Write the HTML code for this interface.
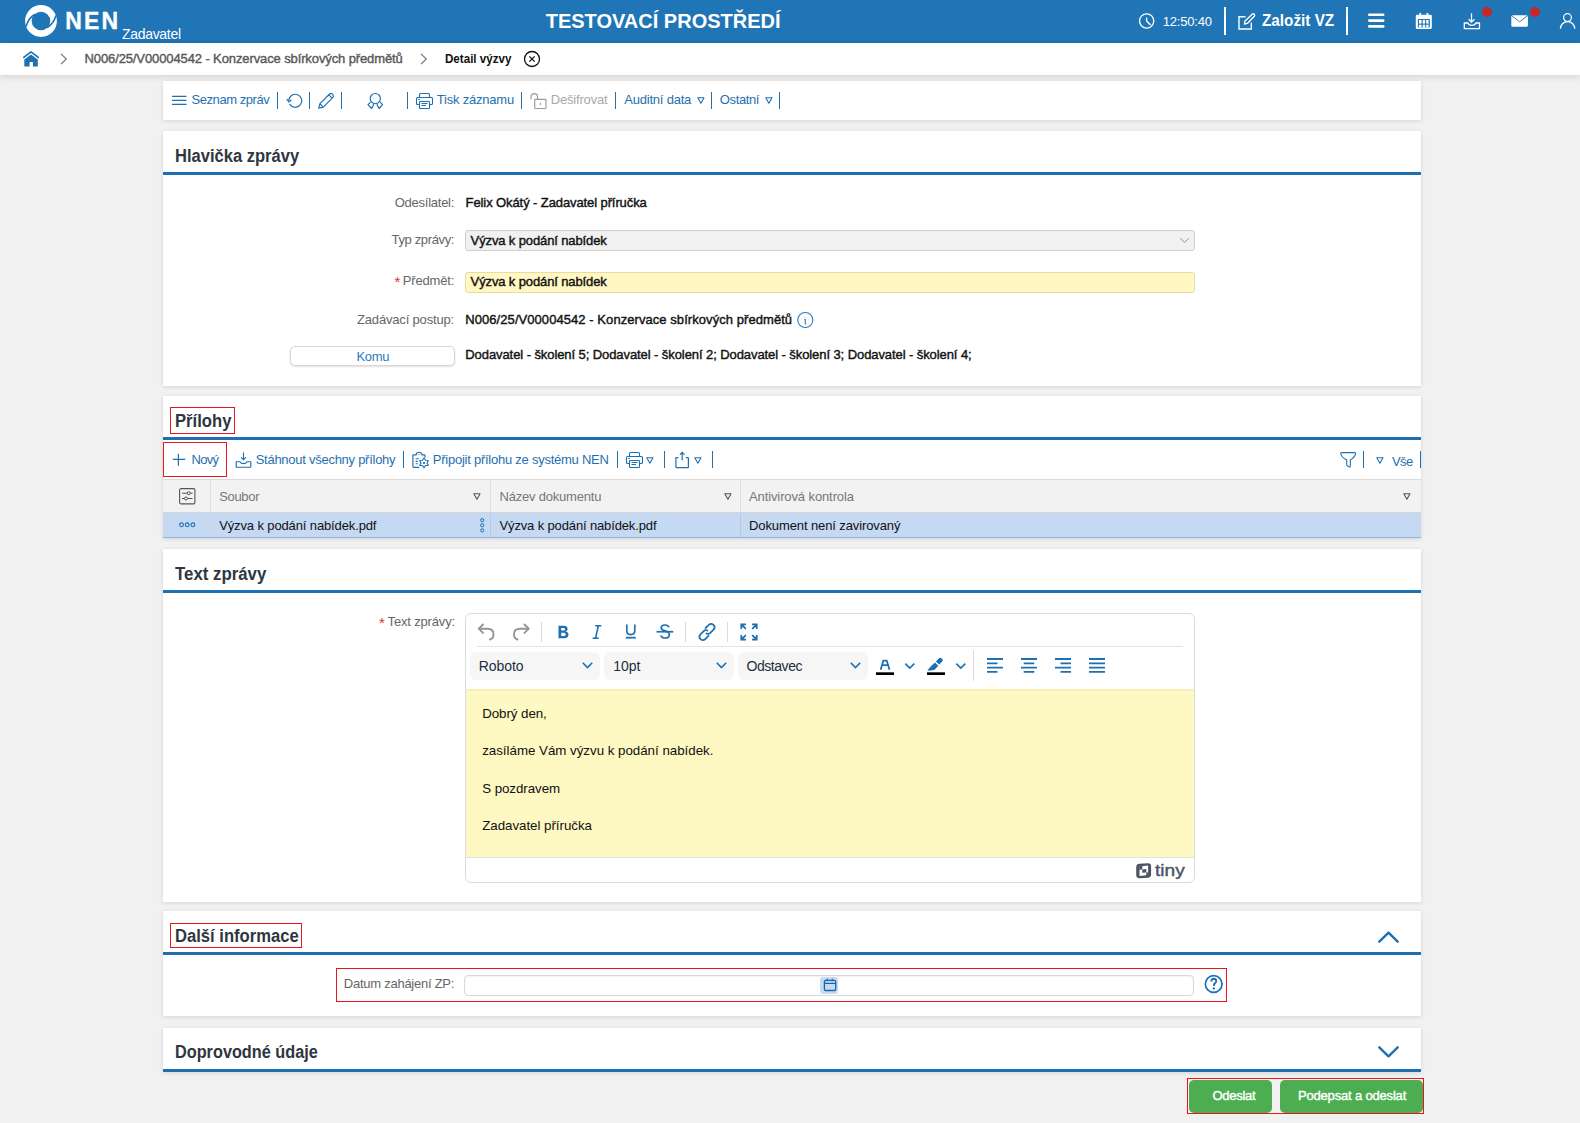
<!DOCTYPE html>
<html lang="cs"><head><meta charset="utf-8"><title>Detail výzvy</title>
<style>
*{box-sizing:border-box;margin:0;padding:0}
html,body{width:1580px;height:1123px;overflow:hidden}
body{background:#f1f1f1;font-family:"Liberation Sans",sans-serif;position:relative}
.t{position:absolute;white-space:nowrap;line-height:1;font-family:"Liberation Sans",sans-serif}
.a{position:absolute}
.hdr{position:absolute;left:0;top:0;width:1580px;height:43px;background:#1f75b6}
.bc{position:absolute;left:0;top:43px;width:1580px;height:32px;background:#fff;box-shadow:0 2px 7px rgba(0,0,0,.12)}
.panel{position:absolute;left:163px;width:1258px;background:#fff;box-shadow:0 1px 4px rgba(0,0,0,.12)}
.hline{position:absolute;left:0;width:1258px;height:3px;background:#1f70b0}
.sep{position:absolute;width:1px;height:17px;background:#1f70b0}
.hsep{position:absolute;width:2px;height:28px;top:7px;background:#fff}
svg{position:absolute;overflow:visible}
.red{position:absolute;border:1px solid #e8141e}

</style></head><body>
<div class="hdr"></div>
<!-- NEN logo -->
<svg style="left:25px;top:5px" width="32" height="32" viewBox="0 0 32 32">
 <circle cx="16" cy="16" r="12.6" fill="none" stroke="#fff" stroke-width="6.6"/>
 <path d="M10 9.2 Q3.5 13 1 21.5" fill="none" stroke="#1f75b6" stroke-width="1.6"/>
 <path d="M22 22.8 Q28.5 19 31 10.5" fill="none" stroke="#1f75b6" stroke-width="1.6"/>
</svg>
<!-- clock -->
<svg style="left:1138px;top:13px" width="17" height="17" viewBox="0 0 17 17">
 <circle cx="8.65" cy="7.95" r="7.15" fill="none" stroke="#fff" stroke-width="1.3"/>
 <path d="M8.6 5.3 V8.1 L12.1 11.4" fill="none" stroke="#fff" stroke-width="1.4" stroke-linecap="round" stroke-linejoin="round"/>
</svg>
<div class="hsep" style="left:1224px"></div>
<!-- edit icon -->
<svg style="left:1238px;top:13px" width="18" height="17" viewBox="0 0 18 17">
 <path d="M7.5 3.7 H1 V16 H13.3 V9.5" fill="none" stroke="#fff" stroke-width="1.4"/>
 <path d="M6.5 11 L7 8 L14.2 1.3 Q15.3 0.4 16.3 1.3 Q17.2 2.3 16.3 3.3 L9.3 10.4 Z" fill="none" stroke="#fff" stroke-width="1.4" stroke-linejoin="round"/>
</svg>
<div class="hsep" style="left:1346px"></div>
<!-- hamburger -->
<svg style="left:1368px;top:13px" width="17" height="15" viewBox="0 0 17 15">
 <rect x="0" y="0.5" width="16.5" height="2.6" rx="1.3" fill="#fff"/>
 <rect x="0" y="6.3" width="16.5" height="2.6" rx="1.3" fill="#fff"/>
 <rect x="0" y="12.1" width="16.5" height="2.6" rx="1.3" fill="#fff"/>
</svg>
<!-- calendar -->
<svg style="left:1415px;top:12px" width="18" height="18" viewBox="0 0 18 18">
 <rect x="0.8" y="2.8" width="16" height="14.1" rx="1.2" fill="#fff"/>
 <rect x="4.4" y="0.9" width="1.7" height="3" fill="#fff"/><rect x="11.6" y="0.9" width="1.7" height="3" fill="#fff"/>
 <rect x="2.9" y="7" width="12" height="8.3" fill="#1f75b6"/>
 <g fill="#fff"><rect x="4" y="8" width="2.5" height="3.6"/><rect x="7.7" y="8" width="2.4" height="3.6"/><rect x="11.2" y="8" width="2.4" height="3.6"/>
 <rect x="4" y="12.7" width="2.5" height="2.5"/><rect x="7.7" y="12.7" width="2.4" height="2.5"/><rect x="11.2" y="12.7" width="2.4" height="2.5"/></g>
</svg>
<!-- download tray -->
<svg style="left:1463px;top:13px" width="18" height="17" viewBox="0 0 18 17">
 <path d="M8.5 0.3 V9" stroke="#fff" stroke-width="1.3"/>
 <path d="M5.6 6.2 L8.5 9.1 L11.4 6.2" fill="none" stroke="#fff" stroke-width="1.3"/>
 <path d="M1.3 10 V15.6 H16.5 V10 H12.8 Q12 12.3 8.9 12.3 Q5.8 12.3 5 10 Z" fill="none" stroke="#fff" stroke-width="1.3" stroke-linejoin="round"/>
</svg>
<div class="a" style="left:1482px;top:7px;width:10px;height:10px;border-radius:5px;background:#c62828"></div>
<!-- mail -->
<svg style="left:1510px;top:14px" width="19" height="14" viewBox="0 0 19 14">
 <rect x="1.3" y="1.2" width="16.6" height="11.6" rx="1.6" fill="#fff"/>
 <path d="M1.7 1.7 L9.6 7.8 L17.5 1.7" fill="none" stroke="#1f75b6" stroke-width="0.9"/>
</svg>
<div class="a" style="left:1530px;top:7px;width:10px;height:10px;border-radius:5px;background:#c62828"></div>
<!-- user -->
<svg style="left:1559px;top:12px" width="18" height="18" viewBox="0 0 18 18">
 <circle cx="8.5" cy="5.6" r="3.9" fill="none" stroke="#fff" stroke-width="1.3"/>
 <path d="M1.4 16.8 A7.2 7.2 0 0 1 15.8 16.8" fill="none" stroke="#fff" stroke-width="1.3"/>
</svg>

<div class="panel" style="top:81px;height:39px"></div>
<div class="bc"></div>
<!-- home -->
<svg style="left:23px;top:50px" width="17" height="17" viewBox="0 0 17 17">
 <path d="M0.8 7.4 L8 1.9 L15.3 7.4" fill="none" stroke="#1f70b0" stroke-width="1.7" stroke-linecap="round" stroke-linejoin="round"/>
 <path d="M1.3 9.6 L8 4.6 L14.8 9.6 V16.6 H9.9 V12 H6.6 V16.6 H1.3 Z" fill="#1f70b0"/>
</svg>
<svg style="left:60px;top:53px" width="8" height="12" viewBox="0 0 8 12"><path d="M1 0.8 L6.3 6 L1 11.2" fill="none" stroke="#707070" stroke-width="1.1"/></svg>
<svg style="left:420px;top:53px" width="8" height="12" viewBox="0 0 8 12"><path d="M1 0.8 L6.3 6 L1 11.2" fill="none" stroke="#707070" stroke-width="1.1"/></svg>
<svg style="left:523px;top:50px" width="18" height="18" viewBox="0 0 18 18">
 <circle cx="9" cy="9" r="7.5" fill="none" stroke="#111" stroke-width="1.3"/>
 <path d="M6.4 6.4 L11.6 11.6 M11.6 6.4 L6.4 11.6" stroke="#111" stroke-width="1.3"/>
</svg>

<!-- toolbar panel -->
<svg style="left:172px;top:95px" width="15" height="11" viewBox="0 0 15 11"><path d="M0 1.3H14.5M0 5.3H14.5M0 9.4H14.5" stroke="#1f70b0" stroke-width="1.2"/></svg>
<div class="sep" style="left:277px;top:92px"></div>
<svg style="left:286px;top:93px" width="17" height="16" viewBox="0 0 17 16">
 <path d="M2.8 7.8 A6.5 6.5 0 1 1 3.67 11.05" fill="none" stroke="#1f70b0" stroke-width="1.2"/>
 <path d="M0.7 6.2 L2.9 8.9 L5.4 6.8" fill="none" stroke="#1f70b0" stroke-width="1.2"/>
</svg>
<div class="sep" style="left:309px;top:92px"></div>
<svg style="left:318px;top:93px" width="17" height="16" viewBox="0 0 17 16">
 <path d="M0.7 15.3 L1.9 10.7 L11.6 1 Q12.9 -0.1 14.2 1 L14.9 1.7 Q16 3 14.9 4.3 L5.3 14.1 Z M10.9 1.8 L14.1 5.1 M1.9 10.7 L5.3 14.1" fill="none" stroke="#1f70b0" stroke-width="1.15" stroke-linejoin="round"/>
</svg>
<div class="sep" style="left:341px;top:92px"></div>
<svg style="left:367px;top:93px" width="17" height="17" viewBox="0 0 17 17">
 <circle cx="8.3" cy="5.6" r="5.1" fill="none" stroke="#1f70b0" stroke-width="1.15"/>
 <path d="M3.6 9.1 L1 11.6 L4.5 15.5 L6.3 12.4 L6.4 10.7 M13 9.1 L15.6 11.6 L12.1 15.5 L10.3 12.4 L10.2 10.7" fill="none" stroke="#1f70b0" stroke-width="1.15" stroke-linejoin="round"/>
</svg>
<div class="sep" style="left:407px;top:92px"></div>
<svg style="left:416px;top:93px" width="17" height="17" viewBox="0 0 17 17">
 <path d="M3.5 4.5 V1.5 Q3.5 0.5 4.5 0.5 H12.5 Q13.5 0.5 13.5 1.5 V4.5 M3.5 11.5 H1.5 Q0.5 11.5 0.5 10.5 V5.5 Q0.5 4.5 1.5 4.5 H15.5 Q16.5 4.5 16.5 5.5 V10.5 Q16.5 11.5 15.5 11.5 H13.5" fill="none" stroke="#1f70b0" stroke-width="1.1"/>
 <rect x="3.5" y="8.5" width="10" height="7" rx="0.8" fill="#fff" stroke="#1f70b0" stroke-width="1.1"/>
 <path d="M5.5 10.5 H11.5 M5.5 12.5 H10 M2.3 6.5 H3.9" stroke="#1f70b0" stroke-width="1.1"/>
</svg>
<div class="sep" style="left:521px;top:92px"></div>
<svg style="left:530px;top:93px" width="17" height="17" viewBox="0 0 17 17">
 <path d="M1 6.6 V3.9 Q1 0.6 4.3 0.6 Q7.6 0.6 7.6 3.9 V6.2" fill="none" stroke="#9a9a9a" stroke-width="1.15"/>
 <rect x="4.7" y="6.3" width="11.3" height="9.2" rx="0.8" fill="#fff" stroke="#9a9a9a" stroke-width="1.15"/>
 <path d="M10.4 9.8 V12.1" stroke="#9a9a9a" stroke-width="1.1"/>
</svg>
<div class="sep" style="left:615px;top:92px"></div>
<svg style="left:697px;top:97px" width="8" height="7" viewBox="0 0 8 7"><path d="M0.8 0.8 H7 L3.9 6.2 Z" fill="none" stroke="#1f70b0" stroke-width="1.1" stroke-linejoin="round"/></svg>
<div class="sep" style="left:711px;top:92px"></div>
<svg style="left:765px;top:97px" width="8" height="7" viewBox="0 0 8 7"><path d="M0.8 0.8 H7 L3.9 6.2 Z" fill="none" stroke="#1f70b0" stroke-width="1.1" stroke-linejoin="round"/></svg>
<div class="sep" style="left:779px;top:92px"></div>

<!-- panel 1 Hlavicka -->
<div class="panel" style="top:131px;height:255px"><div class="hline" style="top:41px"></div></div>
<div class="a" style="left:465px;top:230px;width:730px;height:21px;background:#f1f1f1;border:1px solid #cfcfcf;border-radius:3px"></div>
<svg style="left:1179px;top:237px" width="11" height="7" viewBox="0 0 11 7"><path d="M1.3 1.3 L5.6 5.3 L9.8 1.3" fill="none" stroke="#8a8a8a" stroke-width="0.9"/></svg>
<div class="a" style="left:465px;top:272px;width:730px;height:21px;background:#fff8c4;border:1px solid #e6dd9f;border-radius:3px"></div>
<svg style="left:797px;top:312px" width="17" height="17" viewBox="0 0 17 17">
 <circle cx="8.3" cy="8" r="7.5" fill="none" stroke="#2a7bbd" stroke-width="1.1"/>
 <path d="M8 5.3 V5.8 M7.3 7.5 H8.2 V11 Q8.3 12 9.3 11.8" fill="none" stroke="#2a7bbd" stroke-width="1.1"/>
</svg>
<div class="a" style="left:290px;top:346px;width:165px;height:20px;background:#fff;border:1px solid #d6d6d6;border-radius:5px;box-shadow:0 1px 2px rgba(0,0,0,.12)"></div>

<!-- panel 2 Prilohy -->
<div class="panel" style="top:396px;height:142px"><div class="hline" style="top:41px"></div></div>
<div class="red" style="left:170px;top:407px;width:65px;height:27px"></div>
<div class="red" style="left:163px;top:442px;width:64px;height:35px"></div>
<svg style="left:172px;top:453px" width="14" height="14" viewBox="0 0 14 14"><path d="M6.4 0.8 V12.8 M0.8 6.4 H13.2" stroke="#1f70b0" stroke-width="1.2"/></svg>
<svg style="left:235px;top:452px" width="17" height="17" viewBox="0 0 17 17">
 <path d="M8.5 0.6 V7.7 M6 5.3 L8.5 7.8 L11 5.3" fill="none" stroke="#1f70b0" stroke-width="1.15"/>
 <path d="M1.2 10.1 Q1.2 9.7 1.6 9.7 H5 Q6 11.6 8.5 11.6 Q11 11.6 12 9.7 H15.4 Q15.8 9.7 15.8 10.1 V14.7 Q15.8 15.2 15.3 15.2 H1.7 Q1.2 15.2 1.2 14.7 Z" fill="none" stroke="#1f70b0" stroke-width="1.15" stroke-linejoin="round"/>
</svg>
<div class="sep" style="left:403px;top:451px;height:17px"></div>
<svg style="left:405px;top:446px" width="35" height="26" viewBox="0 0 35 26">
 <path d="M8.3 8.9 Q7.9 8.9 7.9 9.6 V20.5 Q7.9 21.3 8.7 21.3 H14.1 M20 11.8 V9.6 Q20 8.9 19.3 8.9 M8.3 8.9 H11.1 Q11.4 6.2 14.1 6.2 Q16.8 6.2 17.1 8.9 H19.3" fill="none" stroke="#1f70b0" stroke-width="1.15" stroke-linejoin="round"/>
 <circle cx="14.1" cy="8.5" r="0.6" fill="#1f70b0"/>
 <path d="M10.6 12.7 H13.9 M10.6 15.4 H12.8 M10.6 17.8 H12.8" stroke="#1f70b0" stroke-width="1.1"/>
 <polygon points="19.00,12.00 20.50,14.30 23.24,14.45 22.00,16.90 23.24,19.35 20.50,19.50 19.00,21.80 17.50,19.50 14.76,19.35 16.00,16.90 14.76,14.45 17.50,14.30" fill="#fff" stroke="#1f70b0" stroke-width="1.15" stroke-linejoin="round"/>
 <circle cx="19.0" cy="16.9" r="1.1" fill="#1f70b0"/>
</svg>
<div class="sep" style="left:617px;top:451px;height:17px"></div>
<svg style="left:626px;top:452px" width="17" height="17" viewBox="0 0 17 17">
 <path d="M3.5 4.5 V1.5 Q3.5 0.5 4.5 0.5 H12.5 Q13.5 0.5 13.5 1.5 V4.5 M3.5 11.5 H1.5 Q0.5 11.5 0.5 10.5 V5.5 Q0.5 4.5 1.5 4.5 H15.5 Q16.5 4.5 16.5 5.5 V10.5 Q16.5 11.5 15.5 11.5 H13.5" fill="none" stroke="#1f70b0" stroke-width="1.1"/>
 <rect x="3.5" y="8.5" width="10" height="7" rx="0.8" fill="#fff" stroke="#1f70b0" stroke-width="1.1"/>
 <path d="M5.5 10.5 H11.5 M5.5 12.5 H10 M2.3 6.5 H3.9" stroke="#1f70b0" stroke-width="1.1"/>
</svg>
<svg style="left:646px;top:457px" width="8" height="7" viewBox="0 0 8 7"><path d="M0.8 0.8 H7 L3.9 6.2 Z" fill="none" stroke="#1f70b0" stroke-width="1.1" stroke-linejoin="round"/></svg>
<div class="sep" style="left:664px;top:451px;height:17px"></div>
<svg style="left:675px;top:451px" width="15" height="18" viewBox="0 0 15 18">
 <path d="M3.4 6.6 H1.6 Q0.9 6.6 0.9 7.3 V15.9 Q0.9 16.6 1.6 16.6 H12.7 Q13.4 16.6 13.4 15.9 V7.3 Q13.4 6.6 12.7 6.6 H10.9" fill="none" stroke="#1f70b0" stroke-width="1.2"/>
 <path d="M7.2 9.2 V1.4 M4.9 3.6 L7.2 1.3 L9.5 3.6" fill="none" stroke="#1f70b0" stroke-width="1.2"/>
</svg>
<svg style="left:694px;top:457px" width="8" height="7" viewBox="0 0 8 7"><path d="M0.8 0.8 H7 L3.9 6.2 Z" fill="none" stroke="#1f70b0" stroke-width="1.1" stroke-linejoin="round"/></svg>
<div class="sep" style="left:712px;top:451px;height:17px"></div>
<svg style="left:1340px;top:452px" width="17" height="16" viewBox="0 0 17 16">
 <path d="M0.7 1.5 Q0.5 0.6 1.6 0.6 H14.8 Q15.8 0.6 15.6 1.6 Q14.8 5.5 10.3 8 V14.3 Q10.3 15.2 9.4 15 L7.6 14 Q6.7 13.5 6.7 12.6 V8 Q1.6 5.5 0.7 1.5 Z" fill="none" stroke="#1f70b0" stroke-width="1.1"/>
</svg>
<div class="sep" style="left:1363px;top:451px;height:17px"></div>
<svg style="left:1376px;top:457px" width="8" height="7" viewBox="0 0 8 7"><path d="M0.8 0.8 H7 L3.9 6.2 Z" fill="none" stroke="#1f70b0" stroke-width="1.1" stroke-linejoin="round"/></svg>
<div class="sep" style="left:1420px;top:451px;height:17px"></div>
<!-- table -->
<div class="a" style="left:163px;top:479px;width:1258px;height:34px;background:#f2f2f2;border-top:1px solid #dcdcdc;border-bottom:1px solid #d5d5d5"></div>
<div class="a" style="left:210px;top:480px;width:1px;height:32px;background:#dedede"></div>
<div class="a" style="left:490px;top:480px;width:1px;height:58px;background:#dedede"></div>
<div class="a" style="left:740px;top:480px;width:1px;height:58px;background:#dedede"></div>
<div class="a" style="left:163px;top:513px;width:1258px;height:25px;background:#c5d9f3;border-bottom:1px solid #8db4e3"></div>
<div class="a" style="left:490px;top:513px;width:1px;height:24px;background:#b3c8e3"></div>
<div class="a" style="left:740px;top:513px;width:1px;height:24px;background:#b3c8e3"></div>
<svg style="left:179px;top:488px" width="17" height="17" viewBox="0 0 17 17">
 <rect x="0.6" y="0.6" width="15.3" height="15.3" rx="1.5" fill="none" stroke="#555" stroke-width="1.1"/>
 <path d="M3 5.2 H13.5 M3 10.5 H13.5" stroke="#555" stroke-width="1"/>
 <circle cx="9.8" cy="5.2" r="1.5" fill="#f2f2f2" stroke="#555" stroke-width="1"/>
 <circle cx="7" cy="10.5" r="1.5" fill="#f2f2f2" stroke="#555" stroke-width="1"/>
</svg>
<svg style="left:473px;top:493px" width="8" height="7" viewBox="0 0 8 7"><path d="M0.8 0.8 H7 L3.9 6.2 Z" fill="none" stroke="#555" stroke-width="1.1" stroke-linejoin="round"/></svg>
<svg style="left:724px;top:493px" width="8" height="7" viewBox="0 0 8 7"><path d="M0.8 0.8 H7 L3.9 6.2 Z" fill="none" stroke="#555" stroke-width="1.1" stroke-linejoin="round"/></svg>
<svg style="left:1403px;top:493px" width="8" height="7" viewBox="0 0 8 7"><path d="M0.8 0.8 H7 L3.9 6.2 Z" fill="none" stroke="#555" stroke-width="1.1" stroke-linejoin="round"/></svg>
<svg style="left:179px;top:522px" width="17" height="6" viewBox="0 0 17 6">
 <circle cx="2.5" cy="2.8" r="1.9" fill="none" stroke="#1f70b0" stroke-width="1.1"/>
 <circle cx="8.2" cy="2.8" r="1.9" fill="none" stroke="#1f70b0" stroke-width="1.1"/>
 <circle cx="13.9" cy="2.8" r="1.9" fill="none" stroke="#1f70b0" stroke-width="1.1"/>
</svg>
<svg style="left:480px;top:518px" width="5" height="15" viewBox="0 0 5 15">
 <circle cx="2.2" cy="2.2" r="1.6" fill="none" stroke="#1f70b0" stroke-width="1"/>
 <circle cx="2.2" cy="7.3" r="1.6" fill="none" stroke="#1f70b0" stroke-width="1"/>
 <circle cx="2.2" cy="12.4" r="1.6" fill="none" stroke="#1f70b0" stroke-width="1"/>
</svg>

<!-- panel 3 Text zpravy -->
<div class="panel" style="top:549px;height:353px"><div class="hline" style="top:41px"></div></div>
<div class="a" style="left:465px;top:613px;width:730px;height:270px;border:1px solid #dcdcdc;border-radius:6px;background:#fff"></div>
<div class="a" style="left:477px;top:646px;width:706px;height:1px;background:#e3e3e3"></div>
<div class="a" style="left:470px;top:652px;width:130px;height:28px;background:#f6f6f6;border-radius:6px"></div>
<div class="a" style="left:604px;top:652px;width:130px;height:28px;background:#f6f6f6;border-radius:6px"></div>
<div class="a" style="left:738px;top:652px;width:130px;height:28px;background:#f6f6f6;border-radius:6px"></div>
<div class="a" style="left:466px;top:689px;width:728px;height:169px;background:#fef8c3;border-bottom:1px solid #e0e0e6;box-shadow:inset 0 3px 3px -2px rgba(0,0,0,.08)"></div>
<!-- editor toolbar icons -->
<svg style="left:477px;top:622px" width="19" height="19" viewBox="0 0 19 19">
 <path d="M6 2.5 L1.8 6.7 L6 10.9" fill="none" stroke="#949494" stroke-width="1.9" stroke-linecap="round" stroke-linejoin="round"/>
 <path d="M2.2 6.7 H10.5 Q16.5 6.7 16.5 12.2 Q16.5 16.5 13 17.5" fill="none" stroke="#949494" stroke-width="1.9" stroke-linecap="round"/>
</svg>
<svg style="left:512px;top:622px" width="19" height="19" viewBox="0 0 19 19">
 <path d="M12.5 2.5 L16.7 6.7 L12.5 10.9" fill="none" stroke="#949494" stroke-width="1.9" stroke-linecap="round" stroke-linejoin="round"/>
 <path d="M16.3 6.7 H8 Q2 6.7 2 12.2 Q2 16.5 5.5 17.5" fill="none" stroke="#949494" stroke-width="1.9" stroke-linecap="round"/>
</svg>
<div class="a" style="left:541px;top:622px;width:1px;height:20px;background:#dcdcdc"></div>
<div class="a" style="left:685px;top:622px;width:1px;height:20px;background:#dcdcdc"></div>
<div class="a" style="left:727px;top:622px;width:1px;height:20px;background:#dcdcdc"></div>
<svg style="left:557px;top:625px" width="13" height="14" viewBox="0 0 13 14">
 <path d="M1.5 0.8 H6.8 Q10.6 0.8 10.6 3.9 Q10.6 5.8 8.6 6.5 Q11.5 7.1 11.5 9.6 Q11.5 13.2 7.2 13.2 H1.5 Z M4.2 3 V5.6 H6.8 Q8 5.6 8 4.3 Q8 3 6.8 3 Z M4.2 7.8 V11 H7.1 Q8.7 11 8.7 9.4 Q8.7 7.8 7.1 7.8 Z" fill="#1f70b0" fill-rule="evenodd"/>
</svg>
<svg style="left:592px;top:625px" width="10" height="14" viewBox="0 0 10 14">
 <path d="M3.2 0.8 H9.3 M0.6 13.2 H6.7 M6.3 0.8 L3.6 13.2" fill="none" stroke="#1f70b0" stroke-width="1.6"/>
</svg>
<svg style="left:625px;top:624px" width="12" height="15" viewBox="0 0 12 15">
 <path d="M1.8 0.5 V6.8 Q1.8 10.6 5.8 10.6 Q9.8 10.6 9.8 6.8 V0.5" fill="none" stroke="#1f70b0" stroke-width="1.7"/>
 <rect x="0.8" y="12.8" width="10" height="1.8" fill="#1f70b0"/>
</svg>
<svg style="left:656px;top:624px" width="18" height="15" viewBox="0 0 18 15">
 <path d="M13 3.3 Q12.4 1 9 1 Q5.2 1 5.2 3.8 Q5.2 6.1 9 6.9 Q13.3 7.8 13.3 10.7 Q13.3 14 9.1 14 Q5.6 14 4.8 11.5" fill="none" stroke="#1f70b0" stroke-width="1.7"/>
 <rect x="0.5" y="6.9" width="16.7" height="1.7" fill="#1f70b0"/>
</svg>
<svg style="left:697px;top:622px" width="20" height="20" viewBox="0 0 20 20">
 <path d="M8.5 6.2 L11.8 2.9 Q14 0.7 16.5 2.9 Q18.8 5.3 16.6 7.6 L13.3 10.9 Q11.5 12.6 9.5 11.5" fill="none" stroke="#1f70b0" stroke-width="1.7" stroke-linecap="round"/>
 <path d="M11.5 13.8 L8.2 17.1 Q6 19.3 3.5 17.1 Q1.2 14.7 3.4 12.4 L6.7 9.1 Q8.5 7.4 10.5 8.5" fill="none" stroke="#1f70b0" stroke-width="1.7" stroke-linecap="round"/>
</svg>
<svg style="left:740px;top:623px" width="18" height="18" viewBox="0 0 18 18">
 <path d="M1.3 6 V1.3 H6 M1.3 1.3 L5.8 5.8 M16.7 6 V1.3 H12 M16.7 1.3 L12.2 5.8 M1.3 12 V16.7 H6 M1.3 16.7 L5.8 12.2 M16.7 12 V16.7 H12 M16.7 16.7 L12.2 12.2" fill="none" stroke="#1f70b0" stroke-width="1.8"/>
</svg>
<svg style="left:582px;top:662px" width="11" height="7" viewBox="0 0 11 7"><path d="M0.8 0.8 L5.5 5.5 L10.2 0.8" fill="none" stroke="#1f70b0" stroke-width="1.6"/></svg>
<svg style="left:716px;top:662px" width="11" height="7" viewBox="0 0 11 7"><path d="M0.8 0.8 L5.5 5.5 L10.2 0.8" fill="none" stroke="#1f70b0" stroke-width="1.6"/></svg>
<svg style="left:850px;top:662px" width="11" height="7" viewBox="0 0 11 7"><path d="M0.8 0.8 L5.5 5.5 L10.2 0.8" fill="none" stroke="#1f70b0" stroke-width="1.6"/></svg>
<svg style="left:876px;top:658px" width="18" height="18" viewBox="0 0 18 18">
 <path d="M4.6 11.8 L7.4 2.6 H10.7 L13.5 11.8 M6.3 7.1 H11.8" fill="none" stroke="#1f70b0" stroke-width="1.8"/>
 <rect x="0" y="14.3" width="18" height="2.7" fill="#000"/>
</svg>
<svg style="left:904px;top:662px" width="11" height="8" viewBox="0 0 11 8"><path d="M1.3 1.6 L5.8 6.1 L10.3 1.6" fill="none" stroke="#1f70b0" stroke-width="1.6"/></svg>
<svg style="left:927px;top:657px" width="18" height="19" viewBox="0 0 18 19">
 <path d="M8.9 4.4 L12.2 1.1 Q13 0.3 14 0.9 L15.5 2.3 Q16.2 3.3 15.5 4.2 L12.2 7.5 Z" fill="#1f70b0"/>
 <path d="M7.9 5.4 L11.4 8.8 L7.3 12.9 L5.6 13.2 L0.3 13.7 L3.2 10.1 Z" fill="#1f70b0"/>
 <rect x="0" y="15.3" width="18" height="2.7" fill="#000"/>
</svg>
<svg style="left:955px;top:662px" width="11" height="8" viewBox="0 0 11 8"><path d="M1.3 1.6 L5.8 6.1 L10.3 1.6" fill="none" stroke="#1f70b0" stroke-width="1.6"/></svg>
<div class="a" style="left:973px;top:650px;width:1px;height:31px;background:#dcdcdc"></div>
<svg style="left:987px;top:658px" width="17" height="15" viewBox="0 0 17 15"><path d="M0 1H16M0 5.3H10.5M0 9.6H16M0 13.9H10.5" stroke="#1f70b0" stroke-width="1.8"/></svg>
<svg style="left:1021px;top:658px" width="17" height="15" viewBox="0 0 17 15"><path d="M0 1H16M2.7 5.3H13.3M0 9.6H16M2.7 13.9H13.3" stroke="#1f70b0" stroke-width="1.8"/></svg>
<svg style="left:1055px;top:658px" width="17" height="15" viewBox="0 0 17 15"><path d="M0 1H16M5.5 5.3H16M0 9.6H16M5.5 13.9H16" stroke="#1f70b0" stroke-width="1.8"/></svg>
<svg style="left:1089px;top:658px" width="17" height="15" viewBox="0 0 17 15"><path d="M0 1H16M0 5.3H16M0 9.6H16M0 13.9H16" stroke="#1f70b0" stroke-width="1.8"/></svg>
<!-- tiny logo -->
<svg style="left:1136px;top:863px" width="16" height="16" viewBox="0 0 16 16">
 <path d="M3.5 0.8 L11.5 0.2 Q15.2 -0.1 15.1 3.5 L15.1 11.6 Q15.1 14.4 12.2 14.7 L4 15.3 Q0.2 15.6 0.2 11.8 L0.2 4.2 Q0.2 1.1 3.5 0.8 Z" fill="#4b5563"/>
 <path d="M3.5 3.4 L12.1 2.6 L12.1 12.1 L3.5 12.9 Z" fill="#fff"/>
 <path d="M3.2 3.2 L6.3 3 L6.3 6.4 L3.2 6.7 Z M6.3 6.4 L10.3 6.1 L10.3 9.5 L6.3 9.8 Z M10.3 9.5 L12.4 9.3 L12.4 13 L10.3 13.2 Z" fill="#4b5563"/>
</svg>

<!-- panel 4 Dalsi informace -->
<div class="panel" style="top:911px;height:105px"><div class="hline" style="top:41px"></div></div>
<div class="red" style="left:170px;top:923px;width:132px;height:25px"></div>
<svg style="left:1378px;top:931px" width="21" height="12" viewBox="0 0 21 12"><path d="M1.3 10.7 L10.5 1.7 L19.7 10.7" fill="none" stroke="#1f70b0" stroke-width="2.4" stroke-linecap="round" stroke-linejoin="round"/></svg>
<div class="red" style="left:336px;top:968px;width:891px;height:34px"></div>
<div class="a" style="left:464px;top:975px;width:730px;height:21px;background:#fff;border:1px solid #d8d8d8;border-radius:4px;box-shadow:inset 0 1px 2px rgba(0,0,0,.06)"></div>
<div class="a" style="left:820px;top:977px;width:18px;height:17px;background:#c7dcf4;border-radius:3px"></div>
<svg style="left:822px;top:977px" width="16" height="16" viewBox="0 0 16 16">
 <rect x="2.4" y="3.3" width="11.3" height="10.2" rx="1.2" fill="none" stroke="#1d63aa" stroke-width="1.3"/>
 <path d="M2.4 6.4 H13.7 M5.3 1.8 V4.2 M10.3 1.8 V4.2" stroke="#1d63aa" stroke-width="1.3"/>
</svg>
<svg style="left:1204px;top:975px" width="20" height="20" viewBox="0 0 20 20">
 <circle cx="9.7" cy="9" r="8.35" fill="none" stroke="#1f70b0" stroke-width="1.7"/>
 <path d="M7.3 6.6 Q7.3 3.8 9.8 3.8 Q12.2 3.8 12.2 6.1 Q12.2 7.6 10.9 8.4 Q9.8 9.1 9.8 10.9" fill="none" stroke="#1f70b0" stroke-width="1.9"/>
 <circle cx="9.8" cy="13.5" r="1.15" fill="#1f70b0"/>
</svg>

<!-- panel 5 Doprovodne -->
<div class="panel" style="top:1028px;height:44px"><div class="hline" style="top:41px"></div></div>
<svg style="left:1378px;top:1046px" width="21" height="12" viewBox="0 0 21 12"><path d="M1.3 1.3 L10.5 10.3 L19.7 1.3" fill="none" stroke="#1f70b0" stroke-width="2.4" stroke-linecap="round" stroke-linejoin="round"/></svg>

<!-- buttons -->
<div class="red" style="left:1187px;top:1078px;width:237px;height:36px"></div>
<div class="a" style="left:1189px;top:1080px;width:83px;height:33px;background:#4cae50;border-radius:5px"></div>
<div class="a" style="left:1280px;top:1080px;width:143px;height:33px;background:#4cae50;border-radius:5px"></div>

<div class="t" id="t0" style="left:65.3px;top:9.53px;font-size:23px;font-weight:bold;color:#fff;letter-spacing:2.169px;-webkit-text-stroke:0.35px #fff;">NEN</div>
<div class="t" id="t1" style="left:122.0px;top:26.85px;font-size:14px;font-weight:normal;color:#fff;letter-spacing:-0.311px;">Zadavatel</div>
<div class="t" id="t2" style="left:545.7px;top:11.27px;font-size:20px;font-weight:bold;color:#fff;letter-spacing:0.000px;">TESTOVACÍ PROSTŘEDÍ</div>
<div class="t" id="t3" style="left:1162.7px;top:14.80px;font-size:13px;font-weight:normal;color:#fff;letter-spacing:-0.187px;">12:50:40</div>
<div class="t" id="t4" style="left:1262.3px;top:12.96px;font-size:16px;font-weight:bold;color:#fff;letter-spacing:0.000px;transform:scaleX(0.9555);transform-origin:0 0;">Založit VZ</div>
<div class="t" id="t5" style="left:84.5px;top:51.80px;font-size:13px;font-weight:normal;color:#595959;letter-spacing:-0.111px;-webkit-text-stroke:0.4px #595959;">N006/25/V00004542 - Konzervace sbírkových předmětů</div>
<div class="t" id="t6" style="left:444.8px;top:51.80px;font-size:13px;font-weight:bold;color:#111;letter-spacing:0.000px;transform:scaleX(0.8920);transform-origin:0 0;">Detail výzvy</div>
<div class="t" id="t7" style="left:191.5px;top:92.60px;font-size:13px;font-weight:normal;color:#1f70b0;letter-spacing:-0.436px;">Seznam zpráv</div>
<div class="t" id="t8" style="left:436.7px;top:92.60px;font-size:13px;font-weight:normal;color:#1f70b0;letter-spacing:-0.202px;">Tisk záznamu</div>
<div class="t" id="t9" style="left:550.7px;top:92.60px;font-size:13px;font-weight:normal;color:#a9a9a9;letter-spacing:-0.170px;">Dešifrovat</div>
<div class="t" id="t10" style="left:624.3px;top:92.60px;font-size:13px;font-weight:normal;color:#1f70b0;letter-spacing:-0.217px;">Auditní data</div>
<div class="t" id="t11" style="left:719.8px;top:92.60px;font-size:13px;font-weight:normal;color:#1f70b0;letter-spacing:-0.370px;">Ostatní</div>
<div class="t" id="t12" style="left:174.6px;top:146.56px;font-size:18px;font-weight:bold;color:#2f3640;letter-spacing:0.000px;transform:scaleX(0.9186);transform-origin:0 0;">Hlavička zprávy</div>
<div class="t" id="t13" style="left:174.6px;top:411.76px;font-size:18px;font-weight:bold;color:#2f3640;letter-spacing:0.000px;transform:scaleX(0.9244);transform-origin:0 0;">Přílohy</div>
<div class="t" id="t14" style="left:175.0px;top:565.16px;font-size:18px;font-weight:bold;color:#2f3640;letter-spacing:0.000px;transform:scaleX(0.9343);transform-origin:0 0;">Text zprávy</div>
<div class="t" id="t15" style="left:175.3px;top:927.06px;font-size:18px;font-weight:bold;color:#2f3640;letter-spacing:0.000px;transform:scaleX(0.9227);transform-origin:0 0;">Další informace</div>
<div class="t" id="t16" style="left:175.2px;top:1043.46px;font-size:18px;font-weight:bold;color:#2f3640;letter-spacing:0.000px;transform:scaleX(0.9037);transform-origin:0 0;">Doprovodné údaje</div>
<div class="t" id="t17" style="left:394.7px;top:195.90px;font-size:13px;font-weight:normal;color:#666;letter-spacing:-0.246px;">Odesílatel:</div>
<div class="t" id="t18" style="left:465.6px;top:195.90px;font-size:13px;font-weight:normal;color:#111;letter-spacing:-0.098px;-webkit-text-stroke:0.4px #111;">Felix Okátý - Zadavatel příručka</div>
<div class="t" id="t19" style="left:391.6px;top:232.70px;font-size:13px;font-weight:normal;color:#666;letter-spacing:-0.367px;">Typ zprávy:</div>
<div class="t" id="t20" style="left:470.6px;top:234.40px;font-size:13px;font-weight:normal;color:#111;letter-spacing:-0.122px;-webkit-text-stroke:0.4px #111;">Výzva k podání nabídek</div>
<div class="t" id="t21" style="left:394.6px;top:273.90px;font-size:15px;font-weight:normal;color:#d0343a;letter-spacing:0.000px;">*</div>
<div class="t" id="t22" style="left:402.8px;top:274.30px;font-size:13px;font-weight:normal;color:#666;letter-spacing:-0.164px;">Předmět:</div>
<div class="t" id="t23" style="left:470.6px;top:275.30px;font-size:13px;font-weight:normal;color:#111;letter-spacing:-0.122px;-webkit-text-stroke:0.4px #111;">Výzva k podání nabídek</div>
<div class="t" id="t24" style="left:357.0px;top:313.30px;font-size:13px;font-weight:normal;color:#666;letter-spacing:-0.169px;">Zadávací postup:</div>
<div class="t" id="t25" style="left:465.3px;top:313.30px;font-size:13px;font-weight:normal;color:#111;letter-spacing:0.062px;-webkit-text-stroke:0.4px #111;">N006/25/V00004542 - Konzervace sbírkových předmětů</div>
<div class="t" id="t26" style="left:356.6px;top:349.80px;font-size:13px;font-weight:normal;color:#2a7bbd;letter-spacing:-0.390px;">Komu</div>
<div class="t" id="t27" style="left:465.3px;top:347.70px;font-size:13px;font-weight:normal;color:#111;letter-spacing:-0.082px;-webkit-text-stroke:0.4px #111;">Dodavatel - školení 5; Dodavatel - školení 2; Dodavatel - školení 3; Dodavatel - školení 4;</div>
<div class="t" id="t28" style="left:191.5px;top:452.80px;font-size:13px;font-weight:normal;color:#1f70b0;letter-spacing:-0.708px;">Nový</div>
<div class="t" id="t29" style="left:255.7px;top:452.80px;font-size:13px;font-weight:normal;color:#1f70b0;letter-spacing:-0.265px;">Stáhnout všechny přílohy</div>
<div class="t" id="t30" style="left:432.8px;top:452.80px;font-size:13px;font-weight:normal;color:#1f70b0;letter-spacing:-0.247px;">Připojit přílohu ze systému NEN</div>
<div class="t" id="t31" style="left:1392.0px;top:455.00px;font-size:13px;font-weight:normal;color:#1f70b0;letter-spacing:-0.603px;">Vše</div>
<div class="t" id="t32" style="left:219.2px;top:489.80px;font-size:13px;font-weight:normal;color:#777;letter-spacing:-0.324px;">Soubor</div>
<div class="t" id="t33" style="left:499.5px;top:489.80px;font-size:13px;font-weight:normal;color:#777;letter-spacing:-0.206px;">Název dokumentu</div>
<div class="t" id="t34" style="left:749.0px;top:489.80px;font-size:13px;font-weight:normal;color:#777;letter-spacing:-0.109px;">Antivirová kontrola</div>
<div class="t" id="t35" style="left:219.2px;top:518.60px;font-size:13px;font-weight:normal;color:#111;letter-spacing:-0.126px;">Výzva k podání nabídek.pdf</div>
<div class="t" id="t36" style="left:499.5px;top:518.60px;font-size:13px;font-weight:normal;color:#111;letter-spacing:-0.138px;">Výzva k podání nabídek.pdf</div>
<div class="t" id="t37" style="left:749.0px;top:518.60px;font-size:13px;font-weight:normal;color:#111;letter-spacing:-0.105px;">Dokument není zavirovaný</div>
<div class="t" id="t38" style="left:379.0px;top:614.60px;font-size:15px;font-weight:normal;color:#d0343a;letter-spacing:0.000px;">*</div>
<div class="t" id="t39" style="left:387.6px;top:615.00px;font-size:13px;font-weight:normal;color:#666;letter-spacing:-0.169px;">Text zprávy:</div>
<div class="t" id="t40" style="left:478.8px;top:658.95px;font-size:14px;font-weight:normal;color:#222f3e;letter-spacing:-0.091px;">Roboto</div>
<div class="t" id="t41" style="left:613.2px;top:658.95px;font-size:14px;font-weight:normal;color:#222f3e;letter-spacing:0.017px;">10pt</div>
<div class="t" id="t42" style="left:746.5px;top:658.95px;font-size:14px;font-weight:normal;color:#222f3e;letter-spacing:-0.449px;">Odstavec</div>
<div class="t" id="t43" style="left:482.2px;top:706.72px;font-size:13.33px;font-weight:normal;color:#111;letter-spacing:-0.067px;">Dobrý den,</div>
<div class="t" id="t44" style="left:482.2px;top:743.72px;font-size:13.33px;font-weight:normal;color:#111;letter-spacing:-0.020px;">zasíláme Vám výzvu k podání nabídek.</div>
<div class="t" id="t45" style="left:482.2px;top:781.52px;font-size:13.33px;font-weight:normal;color:#111;letter-spacing:-0.063px;">S pozdravem</div>
<div class="t" id="t46" style="left:482.2px;top:818.72px;font-size:13.33px;font-weight:normal;color:#111;letter-spacing:-0.035px;">Zadavatel příručka</div>
<div class="t" id="t47" style="left:1155.0px;top:861.63px;font-size:16.5px;font-weight:normal;color:#4b5563;letter-spacing:0.000px;transform:scaleX(1.1601);transform-origin:0 0;-webkit-text-stroke:0.4px #4b5563;">tiny</div>
<div class="t" id="t48" style="left:343.8px;top:976.90px;font-size:13px;font-weight:normal;color:#666;letter-spacing:-0.252px;">Datum zahájení ZP:</div>
<div class="t" id="t49" style="left:1212.4px;top:1088.70px;font-size:13px;font-weight:normal;color:#fff;letter-spacing:-0.269px;-webkit-text-stroke:0.4px #fff;">Odeslat</div>
<div class="t" id="t50" style="left:1297.9px;top:1088.70px;font-size:13px;font-weight:normal;color:#fff;letter-spacing:-0.171px;-webkit-text-stroke:0.4px #fff;">Podepsat a odeslat</div>
</body></html>
